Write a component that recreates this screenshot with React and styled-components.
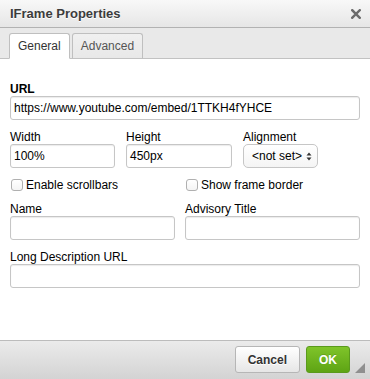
import React from "react";
import styled, { createGlobalStyle } from "styled-components";

const Global = createGlobalStyle`
  html, body { margin: 0; padding: 0; background: #fff; }
  body { font-family: "Liberation Sans", Arial, sans-serif; font-size: 12px; color: #000; }
  * { box-sizing: border-box; }
`;

const Dialog = styled.div`
  width: 370px;
  height: 379px;
  display: flex;
  flex-direction: column;
  background: #fff;
  position: relative;
`;

const TitleBar = styled.div`
  height: 28px;
  flex: none;
  display: flex;
  align-items: center;
  justify-content: space-between;
  padding: 0 9px 0 10px;
  background: linear-gradient(#f8f8f8, #e6e6e6);
  border-bottom: 1px solid #b2b2b2;
  font-weight: bold;
  font-size: 13px;
  color: #3c3c3c;
  text-shadow: 0 1px 0 #fff;
`;

const CloseBtn = styled.svg`
  width: 10px;
  height: 10px;
  margin-top: 1px;
`;

const TabBar = styled.div`
  height: 31px;
  flex: none;
  display: flex;
  align-items: flex-end;
  gap: 2px;
  padding: 0 9px;
  background: #e9e9e9;
  border-bottom: 1px solid #c2c2c2;
`;

const Tab = styled.div`
  height: 26px;
  margin-bottom: -1px;
  padding: 0 8px;
  display: flex;
  align-items: center;
  border: 1px solid #bfbfbf;
  border-bottom-color: ${(p) => (p.$active ? "#fff" : "#c2c2c2")};
  border-radius: 3px 3px 0 0;
  background: ${(p) => (p.$active ? "#fff" : "linear-gradient(#f0f0f0, #e8e8e8)")};
  color: ${(p) => (p.$active ? "#333" : "#555")};
  font-size: 12px;
`;

const Content = styled.div`
  flex: 1;
  padding: 23px 10px 0 10px;
  display: flex;
  flex-direction: column;
  gap: 10px;
`;

const Field = styled.div`
  display: flex;
  flex-direction: column;
`;

const Label = styled.label`
  height: 14px;
  line-height: 14px;
  font-size: 12px;
  font-weight: ${(p) => (p.$bold ? "bold" : "normal")};
  color: #000;
  white-space: nowrap;
`;

const Input = styled.div`
  height: 24px;
  width: ${(p) => p.$w || "100%"};
  border: 1px solid #c6c6c6;
  border-radius: 3px;
  box-shadow: inset 0 1px 1px rgba(0, 0, 0, 0.08);
  background: #fff;
  padding: 0 3px;
  display: flex;
  align-items: center;
  font-size: 12px;
  color: #000;
  white-space: nowrap;
  overflow: hidden;
`;

const Select = styled.div`
  height: 24px;
  width: 75px;
  border: 1px solid #c6c6c6;
  border-radius: 5px;
  background: linear-gradient(#ffffff, #f4f4f4);
  padding: 0 5px 0 8px;
  display: flex;
  align-items: center;
  justify-content: space-between;
  font-size: 12px;
  color: #000;
`;

const Row3 = styled.div`
  display: grid;
  grid-template-columns: 105px 106px 75px;
  column-gap: 11px;
`;

const Row2 = styled.div`
  display: grid;
  grid-template-columns: 165px 1fr;
  column-gap: 10px;
`;

const Check = styled.div`
  height: 14px;
  display: flex;
  align-items: center;
  gap: 3px;
  font-size: 12px;
  color: #000;
  white-space: nowrap;
`;

const Box = styled.span`
  width: 12px;
  height: 12px;
  margin-left: 1px;
  border: 1px solid #b0b0b0;
  border-radius: 3px;
  background: linear-gradient(#fff, #f4f4f4);
  flex: none;
`;

const Footer = styled.div`
  height: 39px;
  flex: none;
  display: flex;
  align-items: flex-start;
  justify-content: flex-end;
  gap: 6px;
  padding: 5px 20px 0 0;
  border-top: 1px solid #bcbcbc;
  background: linear-gradient(#ebebeb, #d3d3d3);
  position: relative;
`;

const Button = styled.div`
  height: 27px;
  padding: 0 12px;
  display: flex;
  align-items: center;
  border-radius: 3px;
  font-weight: bold;
  font-size: 12px;
  border: 1px solid ${(p) => (p.$ok ? "#5a9a1c" : "#b6b6b6")};
  background: ${(p) =>
    p.$ok ? "linear-gradient(#7fc42a, #5ea414)" : "linear-gradient(#ffffff, #e6e6e6)"};
  color: ${(p) => (p.$ok ? "#fff" : "#333")};
  text-shadow: ${(p) => (p.$ok ? "0 -1px 0 rgba(0,0,0,0.15)" : "0 1px 0 #fff")};
`;

const Grip = styled.svg`
  position: absolute;
  right: 5px;
  bottom: 6px;
  width: 10px;
  height: 10px;
`;

export default function App() {
  return (
    <>
      <Global />
      <Dialog>
        <TitleBar>
          <span>IFrame Properties</span>
          <CloseBtn viewBox="0 0 10 10">
            <path d="M1.2 1.2 L8.8 8.8 M8.8 1.2 L1.2 8.8" stroke="#6c6c6c" strokeWidth="2.4" strokeLinecap="square" />
          </CloseBtn>
        </TitleBar>
        <TabBar>
          <Tab $active>General</Tab>
          <Tab>Advanced</Tab>
        </TabBar>
        <Content>
          <Field>
            <Label $bold>URL</Label>
            <Input>https://www.youtube.com/embed/1TTKH4fYHCE</Input>
          </Field>
          <Row3>
            <Field>
              <Label>Width</Label>
              <Input>100%</Input>
            </Field>
            <Field>
              <Label>Height</Label>
              <Input>450px</Input>
            </Field>
            <Field>
              <Label>Alignment</Label>
              <Select>
                <span>&lt;not set&gt;</span>
                <svg width="6" height="9" viewBox="0 0 6 9">
                  <path d="M3 0.5 L5.5 3.6 L0.5 3.6 Z M0.5 5.4 L5.5 5.4 L3 8.5 Z" fill="#333" />
                </svg>
              </Select>
            </Field>
          </Row3>
          <Row2>
            <Check>
              <Box />
              <span>Enable scrollbars</span>
            </Check>
            <Check>
              <Box />
              <span>Show frame border</span>
            </Check>
          </Row2>
          <Row2>
            <Field>
              <Label>Name</Label>
              <Input />
            </Field>
            <Field>
              <Label>Advisory Title</Label>
              <Input />
            </Field>
          </Row2>
          <Field>
            <Label>Long Description URL</Label>
            <Input />
          </Field>
        </Content>
        <Footer>
          <Button>Cancel</Button>
          <Button $ok>OK</Button>
          <Grip viewBox="0 0 10 10">
            <path d="M10 0 L10 10 L0 10 Z" fill="#8f8f8f" />
          </Grip>
        </Footer>
      </Dialog>
    </>
  );
}
